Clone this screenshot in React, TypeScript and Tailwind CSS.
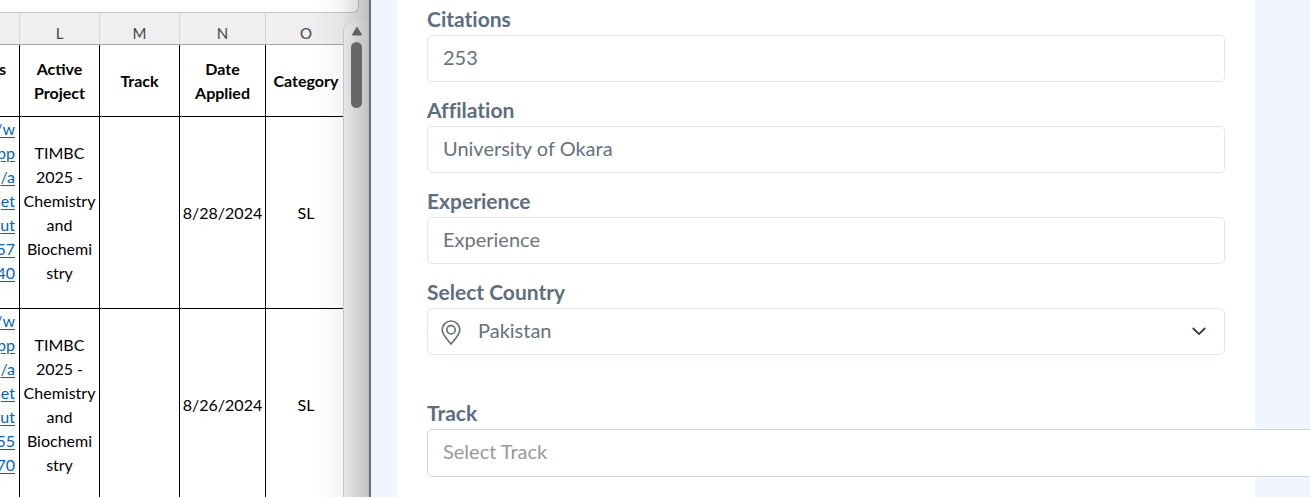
const rows = [
  { link: ["/w", "pp", "/a", "et", "ut", "57", "40"], date: "8/28/2024" },
  { link: ["/w", "pp", "/a", "et", "ut", "55", "70"], date: "8/26/2024" },
];

const project = ["TIMBC", "2025 -", "Chemistry", "and", "Biochemi", "stry"];

const columnHead =
  "h-8 border-r border-[#d4d4d4] p-0 pt-2 text-center align-middle text-[15px] leading-5 font-normal text-[#444]";
const headCell =
  "h-[72px] border-r border-b border-black p-0 text-center align-middle font-bold";
const bodyCell =
  "h-48 border-r border-b border-black p-0 text-center align-middle";

function Sheet() {
  return (
    <table className="w-[346px] table-fixed border-separate border-spacing-0 bg-white text-[16px] leading-6 text-black">
      <colgroup>
        <col className="w-5" />
        <col className="w-20" />
        <col className="w-20" />
        <col className="w-[86px]" />
        <col />
      </colgroup>
      <thead>
        <tr className="bg-[#efefef]">
          {["", "L", "M", "N", "O"].map((name) => (
            <th
              key={name}
              className={`${columnHead} border-b border-b-[#a6a6a6] last:border-r-0`}
            >
              {name}
            </th>
          ))}
        </tr>
        <tr>
          <th className={headCell}>
            <div className="-mt-6 flex justify-end pr-[13px]">s</div>
          </th>
          <th className={headCell}>
            Active
            <br />
            Project
          </th>
          <th className={headCell}>Track</th>
          <th className={headCell}>
            Date
            <br />
            Applied
          </th>
          <th className={`${headCell} border-r-0`}>Category</th>
        </tr>
      </thead>
      <tbody>
        {rows.map((row) => (
          <tr key={row.date}>
            <td className="h-48 border-r border-b border-black p-0 align-top">
              <a
                href="#profile"
                className="flex flex-col items-end pr-1 text-[#0563c1] underline underline-offset-2"
              >
                {row.link.map((part) => (
                  <span key={part}>{part}</span>
                ))}
              </a>
            </td>
            <td className={bodyCell}>
              {project.map((line) => (
                <div key={line} className="whitespace-nowrap">
                  {line}
                </div>
              ))}
            </td>
            <td className={bodyCell} />
            <td className={bodyCell}>{row.date}</td>
            <td className={`${bodyCell} border-r-0`}>SL</td>
          </tr>
        ))}
      </tbody>
    </table>
  );
}

function Spreadsheet() {
  return (
    <section className="relative flex h-full flex-col overflow-hidden border-r-2 border-[#6f6f6f] bg-[#efefef] font-['Lato',sans-serif]">
      <div className="mr-[10px] h-[13px] shrink-0 rounded-br-md border-r border-b border-[#c8c8c8] bg-white" />
      <div className="-mt-px flex min-h-0 flex-1">
        <div className="w-[343px] shrink-0 overflow-hidden border-t border-[#c8c8c8]">
          <Sheet />
        </div>
        <div className="flex flex-1 flex-col pt-2">
          <div className="flex flex-1 flex-col rounded-t-xl border-l border-[#d4d4d4] bg-[#f3f3f3] pt-[5px] pl-[7px]">
            <button type="button" aria-label="Scroll up" className="relative z-10 w-3">
              <svg viewBox="0 0 12 12" className="h-3 w-3" fill="#606060">
                <path d="M6 2.2 10.6 10H1.4Z" stroke="#606060" strokeLinejoin="round" />
              </svg>
            </button>
            <div className="relative z-10 mt-[5px] h-[66px] w-[11px] rounded-full bg-[#676767]" />
          </div>
        </div>
      </div>
      <div className="pointer-events-none absolute inset-y-0 right-0 w-14 bg-linear-to-r from-transparent via-black/4 to-black/20" />
    </section>
  );
}

const labelStyle =
  "block pb-1 text-[21px] leading-6 font-bold text-[#5d6e80] [font-variant-ligatures:none]";
const boxStyle =
  "block w-full rounded-[5px] border border-[#dce5f0] bg-white px-[15px] pb-1 text-[20px] text-[#66727e] outline-none";

function Field({ id, label, value, placeholder }: {
  id: string;
  label: string;
  value?: string;
  placeholder?: string;
}) {
  return (
    <div>
      <label htmlFor={id} className={labelStyle}>
        {label}
      </label>
      <input
        id={id}
        defaultValue={value}
        placeholder={placeholder}
        className={`${boxStyle} h-[47px] placeholder:text-[#6c757d]`}
      />
    </div>
  );
}

function ApplicantForm() {
  return (
    <main className="h-full overflow-hidden bg-[#f1f5ff] pr-[55px] pl-[26px] font-['Lato',sans-serif]">
      <form className="flex min-h-full flex-col gap-4 bg-white px-[30px] pt-[7px]">
        <Field id="citations" label="Citations" value="253" />
        <Field id="affiliation" label="Affilation" value="University of Okara" />
        <Field id="experience" label="Experience" placeholder="Experience" />
        <div>
          <label htmlFor="country" className={labelStyle}>
            Select Country
          </label>
          <div className="relative">
            <select
              id="country"
              defaultValue="Pakistan"
              className={`${boxStyle} h-[47px] appearance-none pl-[50px]`}
            >
              <option>Pakistan</option>
            </select>
            <svg
              viewBox="0 0 20 26"
              className="pointer-events-none absolute top-3 left-[14px] h-[26px] w-5"
              fill="none"
              stroke="#66717c"
              strokeWidth="1.7"
            >
              <path d="M10 24C7.2 20.6 1.2 14.8 1.2 9.8a8.8 8.8 0 0 1 17.6 0c0 5-6 10.8-8.8 14.2Z" strokeLinejoin="round" />
              <circle cx="10" cy="9.8" r="4.2" />
            </svg>
            <svg
              viewBox="0 0 16 16"
              className="pointer-events-none absolute top-[15px] right-[18px] h-4 w-4"
              fill="none"
              stroke="#343a40"
              strokeWidth="1.8"
              strokeLinecap="round"
              strokeLinejoin="round"
            >
              <path d="m2.300 5.500 5.700 5.700 5.700-5.700" />
            </svg>
          </div>
        </div>
        <div className="-mr-24 pt-[30px]">
          <label htmlFor="track" className={labelStyle}>
            Track
          </label>
          <input
            id="track"
            placeholder="Select Track"
            className="block h-12 w-full rounded-[5px] border border-[#ced4da] bg-white px-[15px] pb-1 text-[20px] outline-none placeholder:text-[#999]"
          />
        </div>
      </form>
    </main>
  );
}

export default function App() {
  return (
    <div className="grid h-screen grid-cols-[371px_minmax(0,1fr)] overflow-hidden bg-white">
      <Spreadsheet />
      <ApplicantForm />
    </div>
  );
}
